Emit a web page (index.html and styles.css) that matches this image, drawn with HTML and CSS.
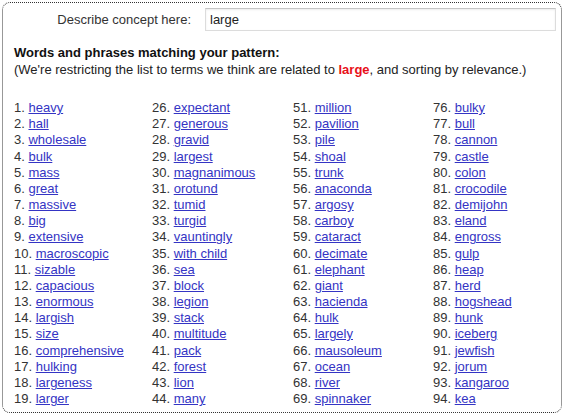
FILE: index.html
```html
<!DOCTYPE html>
<html>
<head>
<meta charset="utf-8">
<link rel="stylesheet" href="styles.css">
</head>
<body>
<div class="frame">
  <div class="concept">
    <label class="concept-label">Describe concept here:</label>
    <div class="concept-input">large</div>
  </div>
  <div class="heading">Words and phrases matching your pattern:</div>
  <div class="note">(We're restricting the list to terms we think are related to <span class="hl">large</span>, and sorting by relevance.)</div>
  <div class="results">
    <ol class="col">
      <li>1. <a href="#">heavy</a></li>
      <li>2. <a href="#">hall</a></li>
      <li>3. <a href="#">wholesale</a></li>
      <li>4. <a href="#">bulk</a></li>
      <li>5. <a href="#">mass</a></li>
      <li>6. <a href="#">great</a></li>
      <li>7. <a href="#">massive</a></li>
      <li>8. <a href="#">big</a></li>
      <li>9. <a href="#">extensive</a></li>
      <li>10. <a href="#">macroscopic</a></li>
      <li>11. <a href="#">sizable</a></li>
      <li>12. <a href="#">capacious</a></li>
      <li>13. <a href="#">enormous</a></li>
      <li>14. <a href="#">largish</a></li>
      <li>15. <a href="#">size</a></li>
      <li>16. <a href="#">comprehensive</a></li>
      <li>17. <a href="#">hulking</a></li>
      <li>18. <a href="#">largeness</a></li>
      <li>19. <a href="#">larger</a></li>
    </ol>
    <ol class="col">
      <li>26. <a href="#">expectant</a></li>
      <li>27. <a href="#">generous</a></li>
      <li>28. <a href="#">gravid</a></li>
      <li>29. <a href="#">largest</a></li>
      <li>30. <a href="#">magnanimous</a></li>
      <li>31. <a href="#">orotund</a></li>
      <li>32. <a href="#">tumid</a></li>
      <li>33. <a href="#">turgid</a></li>
      <li>34. <a href="#">vauntingly</a></li>
      <li>35. <a href="#">with child</a></li>
      <li>36. <a href="#">sea</a></li>
      <li>37. <a href="#">block</a></li>
      <li>38. <a href="#">legion</a></li>
      <li>39. <a href="#">stack</a></li>
      <li>40. <a href="#">multitude</a></li>
      <li>41. <a href="#">pack</a></li>
      <li>42. <a href="#">forest</a></li>
      <li>43. <a href="#">lion</a></li>
      <li>44. <a href="#">many</a></li>
    </ol>
    <ol class="col">
      <li>51. <a href="#">million</a></li>
      <li>52. <a href="#">pavilion</a></li>
      <li>53. <a href="#">pile</a></li>
      <li>54. <a href="#">shoal</a></li>
      <li>55. <a href="#">trunk</a></li>
      <li>56. <a href="#">anaconda</a></li>
      <li>57. <a href="#">argosy</a></li>
      <li>58. <a href="#">carboy</a></li>
      <li>59. <a href="#">cataract</a></li>
      <li>60. <a href="#">decimate</a></li>
      <li>61. <a href="#">elephant</a></li>
      <li>62. <a href="#">giant</a></li>
      <li>63. <a href="#">hacienda</a></li>
      <li>64. <a href="#">hulk</a></li>
      <li>65. <a href="#">largely</a></li>
      <li>66. <a href="#">mausoleum</a></li>
      <li>67. <a href="#">ocean</a></li>
      <li>68. <a href="#">river</a></li>
      <li>69. <a href="#">spinnaker</a></li>
    </ol>
    <ol class="col">
      <li>76. <a href="#">bulky</a></li>
      <li>77. <a href="#">bull</a></li>
      <li>78. <a href="#">cannon</a></li>
      <li>79. <a href="#">castle</a></li>
      <li>80. <a href="#">colon</a></li>
      <li>81. <a href="#">crocodile</a></li>
      <li>82. <a href="#">demijohn</a></li>
      <li>83. <a href="#">eland</a></li>
      <li>84. <a href="#">engross</a></li>
      <li>85. <a href="#">gulp</a></li>
      <li>86. <a href="#">heap</a></li>
      <li>87. <a href="#">herd</a></li>
      <li>88. <a href="#">hogshead</a></li>
      <li>89. <a href="#">hunk</a></li>
      <li>90. <a href="#">iceberg</a></li>
      <li>91. <a href="#">jewfish</a></li>
      <li>92. <a href="#">jorum</a></li>
      <li>93. <a href="#">kangaroo</a></li>
      <li>94. <a href="#">kea</a></li>
    </ol>
  </div>
</div>
</body>
</html>
```
FILE: styles.css
```css
html, body {
  margin: 0;
  padding: 0;
  background: #fff;
}
body {
  font-family: "Liberation Sans", Arial, sans-serif;
  font-size: 13px;
  color: #222;
}
.frame {
  box-sizing: border-box;
  margin: 2px 0 0 2px;
  width: 560px;
  height: 411px;
  border: 1px dotted #333;
  border-radius: 8px;
  overflow: hidden;
  padding: 4px 3px 0 11px;
}
.concept {
  display: flex;
  align-items: center;
  height: 24px;
}
.concept-label {
  width: 177px;
  text-align: right;
  color: #333;
  margin-right: 14px;
}
.concept-input {
  flex: 1;
  box-sizing: border-box;
  height: 23px;
  line-height: 21px;
  padding: 0 4px;
  border: 1px solid #dcdcdc;
  border-top-color: #c4c4c4;
  box-shadow: inset 0 1px 2px rgba(0,0,0,0.08);
  color: #222;
  margin-right: 2px;
}
.heading {
  margin-top: 13px;
  font-weight: bold;
  color: #111;
  line-height: 17px;
}
.note {
  line-height: 17px;
  color: #222;
}
.hl {
  color: #e8101a;
  font-weight: bold;
}
.results {
  display: grid;
  grid-template-columns: 138px 141px 140px 1fr;
  margin-top: 22px;
}
.col {
  list-style: none;
  margin: 0;
  padding: 0;
}
.col li {
  line-height: 16.17px;
  color: #333;
  white-space: nowrap;
}
.col a {
  color: #3434c4;
  text-decoration: underline;
}
```
